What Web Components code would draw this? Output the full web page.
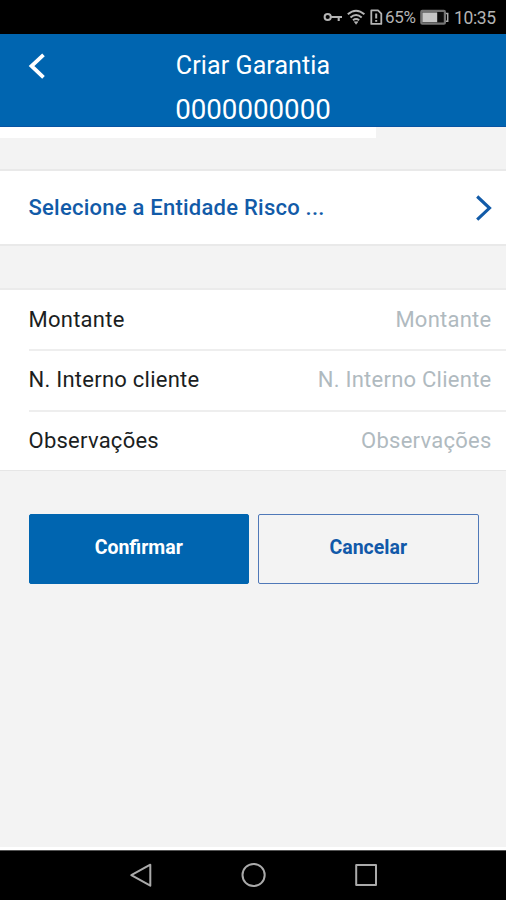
<!DOCTYPE html>
<html lang="pt">

<head>
  <meta charset="UTF-8">
  <meta name="viewport" content="width=device-width, initial-scale=1.0">
  <title>Criar Garantia</title>
  <style>
    body {
      margin: 0;
      font-family: Roboto, "Liberation Sans", sans-serif;
    }
  </style>
</head>

<body>
  <template id="status-bar">
    <style>
      :host {
        display: flex;
        align-items: center;
        flex: none;
        height: 34px;
        box-sizing: border-box;
        padding-left: 323px;
        background: #000;
        color: #b4b4b4;
        font-size: 17px;
        white-space: nowrap;
      }

      svg {
        display: block;
        flex: none;
      }

      .icons {
        width: 62px;
      }

      .percent {
        width: 35px;
        letter-spacing: -.3px;
      }

      .time {
        font-size: 17.5px;
        letter-spacing: -.35px;
        margin: 2px 0 0 4px;
      }
    </style>
    <svg class="icons" height="34" viewBox="0 0 62 34">
      <g fill="none" stroke="#b4b4b4">
        <circle cx="4.7" cy="17" r="3.1" stroke-width="2" />
        <path d="M8 17H19M15.7 17V21" stroke-width="2.1" />
        <path d="M24.8 14.3Q33 7.2 41.4 14.3" stroke-width="2" />
        <path d="M27.5 17.4Q33 12.5 38.7 17.4" stroke-width="2" />
        <path d="M30 20.2Q33 17.8 36.2 20.2" stroke-width="2" />
        <path d="M31.2 21.7L33.1 24.3L35 21.7Z" fill="#b4b4b4" stroke-width=".6" />
        <path d="M48.3 10.4H55L58.3 13.7V23.9H48.3Z" stroke-width="1.8" stroke-linejoin="round" />
        <path d="M53.2 13.5V18.4M53.2 19.9V21.8" stroke-width="2" />
      </g>
    </svg>
    <span class="percent">65%</span>
    <svg width="30" height="34" viewBox="0 0 30 34">
      <rect x="1.3" y="10.9" width="23.6" height="12.8" rx="1" fill="#0c0c0c" stroke="#747474" stroke-width="2.2" />
      <rect x="2.4" y="12.4" width="14.8" height="9.8" fill="#c6c6c6" />
      <path d="M25.9 13.5H27.7V21.2H25.9" fill="none" stroke="#aaa" stroke-width="1.5" />
    </svg>
    <span class="time">10:35</span>
  </template>

  <template id="page-header">
    <style>
      :host {
        display: grid;
        grid-template-columns: 60px 1fr 60px;
        flex: none;
        height: 93px;
        box-sizing: border-box;
        border-bottom: 1px solid #0854a3;
        background: #0065b0;
        color: #fff;
        text-align: center;
      }

      svg {
        display: block;
        margin: 18px 0 0 26px;
      }

      .title {
        font-size: 25px;
        line-height: 30px;
        margin-top: 17px;
        letter-spacing: .1px;
      }

      .number {
        font-size: 27.7px;
        line-height: 32px;
        margin-top: 13px;
      }
    </style>
    <svg width="24" height="30" viewBox="0 0 24 30">
      <path d="M17.5 2.8L5.5 14L17.5 25.4" fill="none" stroke="#fff" stroke-width="3.8" />
    </svg>
    <div>
      <div class="title"><slot></slot></div>
      <div class="number"><slot name="number"></slot></div>
    </div>
  </template>

  <template id="select-row">
    <style>
      :host {
        display: flex;
        align-items: center;
        justify-content: space-between;
        flex: none;
        height: 77px;
        box-sizing: border-box;
        padding: 0 13px 0 28.5px;
        border-top: 2px solid #e9e9e9;
        border-bottom: 2px solid #e9e9e9;
        background: #fff;
        color: #125ba8;
        font-size: 22px;
        font-weight: 500;
        letter-spacing: .24px;
      }

      svg {
        display: block;
      }
    </style>
    <slot></slot>
    <svg width="18" height="28" viewBox="0 0 18 28">
      <path d="M2.2 2.5L14.5 14L2.2 25.7" fill="none" stroke="#125ba8" stroke-width="3.1" />
    </svg>
  </template>

  <template id="form-group">
    <style>
      :host {
        display: flex;
        flex-direction: column;
        flex: none;
        height: 183px;
        box-sizing: border-box;
        margin-top: 42px;
        border-top: 2px solid #ebebeb;
        border-bottom: 1px solid #e6e6e6;
        background: #fff;
      }
    </style>
    <slot></slot>
  </template>

  <template id="form-field">
    <style>
      :host {
        display: flex;
        align-items: center;
        justify-content: space-between;
        flex: none;
        height: 61px;
        box-sizing: border-box;
        margin-left: 28.5px;
        padding: 0 14.5px 2px 0;
        border-bottom: 2px solid #eee;
        color: #1b1e22;
        font-size: 22px;
        letter-spacing: .25px;
      }

      :host(:first-child) {
        padding-bottom: 1px;
      }

      :host(:last-child) {
        height: 59px;
        border-bottom: 0;
      }

      .hint {
        color: #b0babf;
      }
    </style>
    <span class="label"></span>
    <span class="hint"><slot></slot></span>
  </template>

  <template id="action-button">
    <style>
      :host {
        display: block;
        flex: 1;
      }

      button {
        display: block;
        width: 100%;
        height: 70px;
        padding: 0 0 3px;
        border: 1.5px solid #4f78b8;
        border-radius: 2px;
        background: transparent;
        color: #1159a9;
        font: 700 19.5px Roboto, "Liberation Sans", sans-serif;
        cursor: pointer;
      }

      :host([primary]) button {
        border-color: #0065b0;
        background: #0065b0;
        color: #fff;
      }
    </style>
    <button><slot></slot></button>
  </template>

  <template id="nav-bar">
    <style>
      :host {
        display: flex;
        align-items: center;
        justify-content: space-between;
        flex: none;
        height: 50px;
        box-sizing: border-box;
        padding: 0 128px 1px 129px;
        background: #000;
        border-top: 1px solid #555;
      }

      svg {
        display: block;
      }

      path, circle, rect {
        fill: none;
        stroke: #aaa;
        stroke-width: 2;
        stroke-linejoin: round;
      }
    </style>
    <svg width="24" height="26" viewBox="0 0 24 26">
      <path d="M2.3 13.2L21.3 2.7V23.7Z" />
    </svg>
    <svg width="26" height="26" viewBox="0 0 26 26">
      <circle cx="12.6" cy="13" r="11.1" />
    </svg>
    <svg width="24" height="26" viewBox="0 0 24 26">
      <rect x="2.2" y="3" width="19.8" height="20" />
    </svg>
  </template>

  <template id="garantia-app">
    <style>
      :host {
        display: flex;
        flex-direction: column;
        height: 900px;
        background: #f3f3f3;
      }

      .progress {
        flex: none;
        width: 376px;
        height: 11px;
        margin-bottom: 31px;
        background: #fff;
      }

      .actions {
        display: flex;
        gap: 9px;
        margin: 43px 27.5px 0 28.5px;
      }

      .edge {
        height: 3px;
        margin-top: auto;
        background: #fff;
      }
    </style>
    <status-bar></status-bar>
    <page-header>Criar Garantia<span slot="number">0000000000</span></page-header>
    <div class="progress"></div>
    <select-row>Selecione a Entidade Risco ...</select-row>
    <form-group>
      <form-field label="Montante">Montante</form-field>
      <form-field label="N. Interno cliente">N. Interno Cliente</form-field>
      <form-field label="Observações">Observações</form-field>
    </form-group>
    <div class="actions">
      <action-button primary>Confirmar</action-button>
      <action-button>Cancelar</action-button>
    </div>
    <div class="edge"></div>
    <nav-bar></nav-bar>
  </template>

  <garantia-app></garantia-app>

  <script>
    class BaseElement extends HTMLElement {
      constructor() {
        super();
        // each element uses the template named after its tag
        const template = document.getElementById(this.localName).content;
        this.attachShadow({ mode: 'open' }).appendChild(template.cloneNode(true));
      }
    }

    class FormField extends BaseElement {
      connectedCallback() {
        this.shadowRoot.querySelector('.label').textContent = this.getAttribute('label');
      }
    }

    customElements.define('status-bar', class extends BaseElement {});
    customElements.define('page-header', class extends BaseElement {});
    customElements.define('select-row', class extends BaseElement {});
    customElements.define('form-group', class extends BaseElement {});
    customElements.define('form-field', FormField);
    customElements.define('action-button', class extends BaseElement {});
    customElements.define('nav-bar', class extends BaseElement {});
    customElements.define('garantia-app', class extends BaseElement {});
  </script>
</body>

</html>
